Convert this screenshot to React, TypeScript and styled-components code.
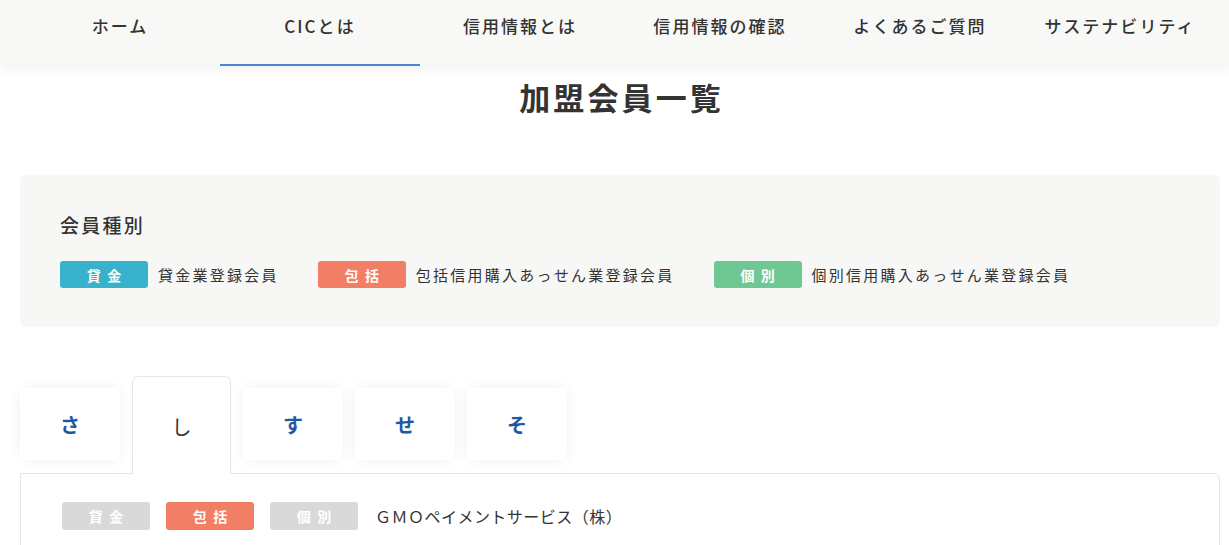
import styled, { createGlobalStyle } from "styled-components";

const GlobalStyle = createGlobalStyle`
  body {
    margin: 0;
    background: #fff;
    color: #333;
    font-family: "Noto Sans CJK JP", "Noto Sans", sans-serif;
  }
`;

const Header = styled.header`
  background: #f8f8f6;
  box-shadow: 0 4px 10px rgba(0, 0, 0, 0.05);
  position: relative;
  z-index: 1;
`;

const Nav = styled.nav`
  display: flex;
  width: 1200px;
  margin-left: 20px;
`;

const NavItem = styled.a<{ $active?: boolean }>`
  width: 200px;
  height: 66px;
  box-sizing: border-box;
  padding-bottom: 14px;
  display: flex;
  align-items: center;
  justify-content: center;
  font-size: 17px;
  font-weight: 500;
  letter-spacing: 0.12em;
  color: #333;
  text-decoration: none;
  border-bottom: 2px solid ${({ $active }) => ($active ? "#4a86d0" : "transparent")};
`;

const Main = styled.main`
  width: 1200px;
  margin-left: 20px;
`;

const Title = styled.h1`
  margin: 8px 0 56px;
  text-align: center;
  font-size: 31px;
  line-height: 45px;
  font-weight: 700;
  letter-spacing: 0.1em;
  text-indent: 0.1em;
  color: #333;
`;

const LegendBox = styled.section`
  background: #f7f7f5;
  border-radius: 6px;
  padding: 36px 40px 39px;
`;

const LegendTitle = styled.h2`
  margin: 0 0 22px;
  font-size: 19px;
  line-height: 28px;
  font-weight: 500;
  letter-spacing: 0.12em;
`;

const LegendList = styled.div`
  display: flex;
  align-items: center;
  gap: 39px;
`;

const LegendItem = styled.div`
  display: flex;
  align-items: center;
  gap: 10px;
  font-size: 15px;
  letter-spacing: 0.15em;
  color: #333;
`;

const Badge = styled.span<{ $color: string; $h?: number }>`
  width: 88px;
  height: ${({ $h }) => $h ?? 27}px;
  border-radius: 3px;
  background: ${({ $color }) => $color};
  color: #fff;
  font-size: 14px;
  font-weight: 700;
  letter-spacing: 0.45em;
  text-indent: 0.45em;
  display: inline-flex;
  align-items: center;
  justify-content: center;
`;

const Tabs = styled.div`
  display: flex;
  align-items: flex-end;
  gap: 12px;
  margin-top: 49px;
  position: relative;
  z-index: 1;
`;

const Tab = styled.button<{ $active?: boolean }>`
  width: ${({ $active }) => ($active ? 99 : 100)}px;
  height: ${({ $active }) => ($active ? 98 : 72)}px;
  margin-bottom: ${({ $active }) => ($active ? -1 : 13)}px;
  box-sizing: border-box;
  border: ${({ $active }) => ($active ? "1px solid #e6e6e6" : "none")};
  border-bottom: none;
  border-radius: 6px 6px ${({ $active }) => ($active ? "0 0" : "6px 6px")};
  background: #fff;
  box-shadow: ${({ $active }) => ($active ? "none" : "0 0 14px rgba(0, 0, 0, 0.06)")};
  font-family: inherit;
  font-size: 20px;
  font-weight: ${({ $active }) => ($active ? 400 : 700)};
  color: ${({ $active }) => ($active ? "#333" : "#1d58a0")};
  padding: 0;
  padding-top: ${({ $active }) => ($active ? 2 : 0)}px;
  cursor: pointer;
`;

const Panel = styled.section`
  border: 1px solid #e6e6e6;
  border-radius: 0 6px 0 0;
  padding: 28px 41px 20px;
  min-height: 80px;
  background: #fff;
`;

const MemberRow = styled.div`
  display: flex;
  align-items: center;
  gap: 16px;
`;

const MemberName = styled.span`
  margin-left: 1px;
  font-size: 16px;
  letter-spacing: 0.03em;
  color: #333;
`;

const GRAY = "#d9d9d9";
const TEAL = "#38b2cb";
const ORANGE = "#f37e66";
const GREEN = "#6fc794";

const navItems = ["ホーム", "CICとは", "信用情報とは", "信用情報の確認", "よくあるご質問", "サステナビリティ"];
const kana = ["さ", "し", "す", "せ", "そ"];

const App = () => {
  return (
    <>
      <GlobalStyle />
      <Header>
        <Nav>
          {navItems.map((item) => (
            <NavItem key={item} href="#" $active={item === "CICとは"}>
              {item}
            </NavItem>
          ))}
        </Nav>
      </Header>
      <Main>
        <Title>加盟会員一覧</Title>
        <LegendBox>
          <LegendTitle>会員種別</LegendTitle>
          <LegendList>
            <LegendItem>
              <Badge $color={TEAL}>貸金</Badge>貸金業登録会員
            </LegendItem>
            <LegendItem>
              <Badge $color={ORANGE}>包括</Badge>包括信用購入あっせん業登録会員
            </LegendItem>
            <LegendItem>
              <Badge $color={GREEN}>個別</Badge>個別信用購入あっせん業登録会員
            </LegendItem>
          </LegendList>
        </LegendBox>
        <Tabs>
          {kana.map((k) => (
            <Tab key={k} $active={k === "し"}>
              {k}
            </Tab>
          ))}
        </Tabs>
        <Panel>
          <MemberRow>
            <Badge $color={GRAY} $h={28}>貸金</Badge>
            <Badge $color={ORANGE} $h={28}>包括</Badge>
            <Badge $color={GRAY} $h={28}>個別</Badge>
            <MemberName>ＧＭＯペイメントサービス（株）</MemberName>
          </MemberRow>
        </Panel>
      </Main>
    </>
  );
};

export default App;
